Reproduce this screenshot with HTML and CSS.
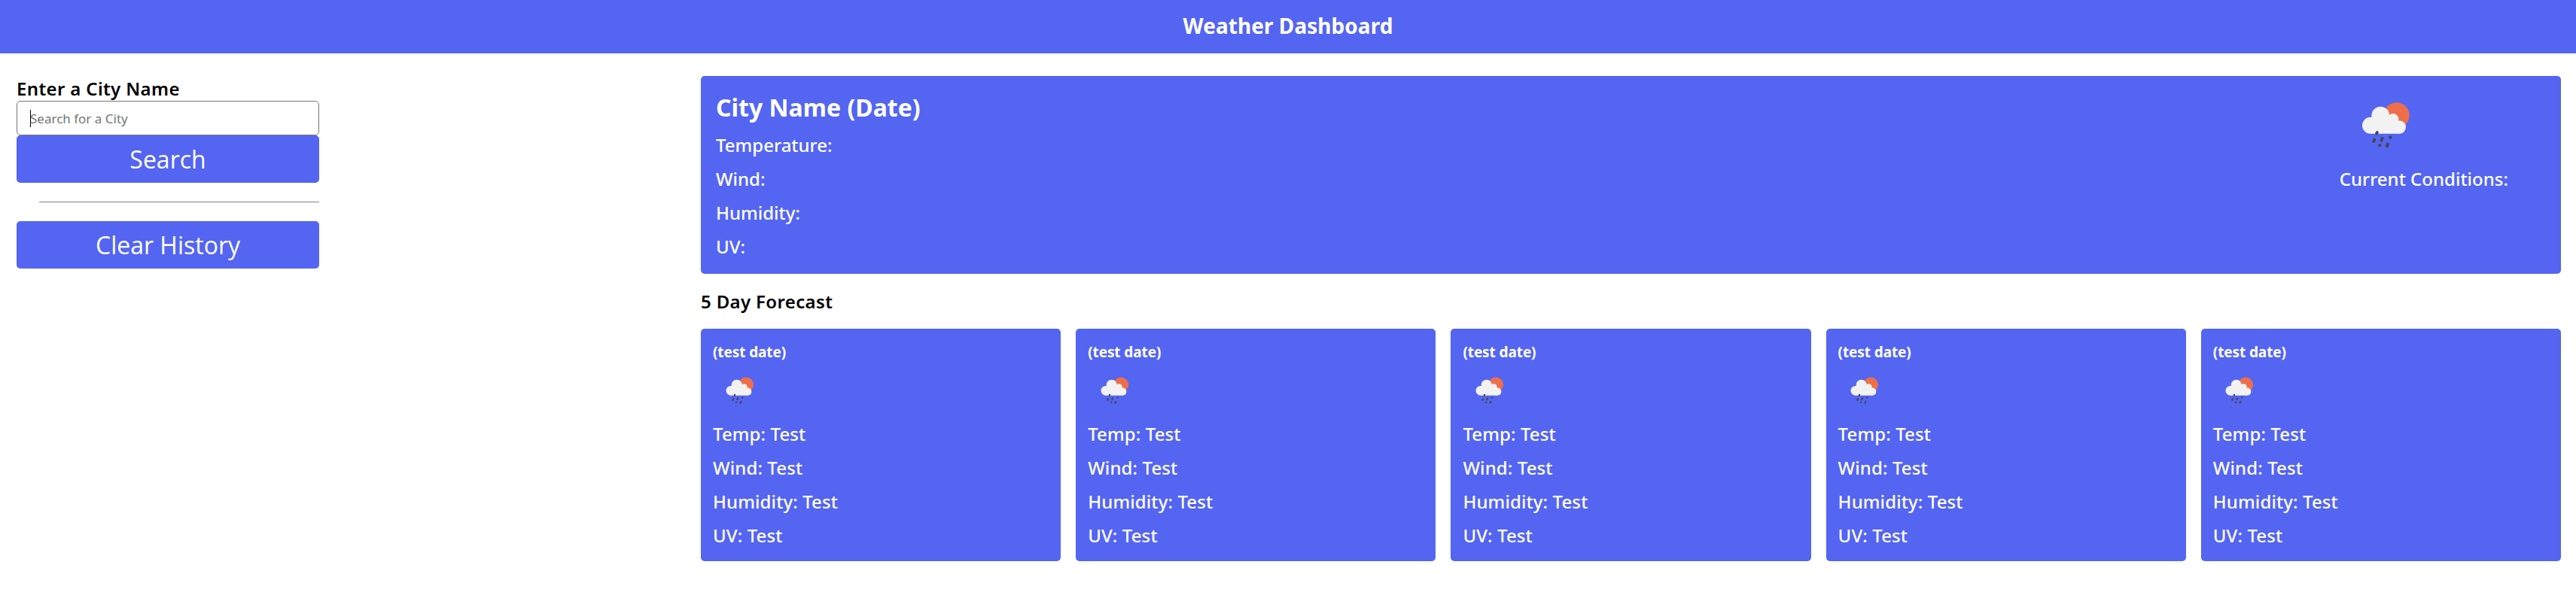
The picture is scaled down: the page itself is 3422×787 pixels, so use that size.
FILE: index.html
```html
<!DOCTYPE html>
<html lang="en">
<head>
<meta charset="utf-8">
<title>Weather Dashboard</title>
<link rel="stylesheet" href="styles.css">
</head>
<body>
<svg class="defs" width="0" height="0">
  <symbol id="rain" viewBox="0 0 300 255">
    <circle cx="191" cy="85" r="51" fill="#ed6f4a"/>
    <g fill="#f2f2f2">
      <circle cx="127" cy="86" r="36"/>
      <circle cx="87" cy="125" r="33"/>
      <circle cx="177" cy="100" r="22"/>
      <circle cx="202" cy="132" r="26"/>
      <path d="M87 100H190L202 120V158H87z"/>
    </g>
    <g stroke="#464655" stroke-width="12" stroke-linecap="round">
      <path d="M111.500 157L113.500 153.500M99.500 189L103 182M130.500 185L134 177M165.500 173.500L167 172M123.500 205L125 204M152.500 208L156 200"/>
    </g>
  </symbol>
</svg>
<header class="header"><h1>Weather Dashboard</h1></header>
<main class="layout">
  <aside class="sidebar">
    <h3>Enter a City Name</h3>
    <div class="field"><span class="caret"></span><span class="placeholder">Search for a City</span></div>
    <button class="btn">Search</button>
    <hr>
    <button class="btn">Clear History</button>
  </aside>
  <section class="content">
    <div class="current">
      <div>
        <h2>City Name (Date)</h2>
        <p>Temperature:</p><p>Wind:</p><p>Humidity:</p><p>UV:</p>
      </div>
      <div class="conditions">
        <svg class="icon"><use href="#rain"/></svg>
        <p>Current Conditions:</p>
      </div>
    </div>
    <h3 class="forecast-title">5 Day Forecast</h3>
    <div class="forecast">
      <div class="day"><h4>(test date)</h4><svg class="icon-sm"><use href="#rain"/></svg><p>Temp: Test</p><p>Wind: Test</p><p>Humidity: Test</p><p>UV: Test</p></div>
      <div class="day"><h4>(test date)</h4><svg class="icon-sm"><use href="#rain"/></svg><p>Temp: Test</p><p>Wind: Test</p><p>Humidity: Test</p><p>UV: Test</p></div>
      <div class="day"><h4>(test date)</h4><svg class="icon-sm"><use href="#rain"/></svg><p>Temp: Test</p><p>Wind: Test</p><p>Humidity: Test</p><p>UV: Test</p></div>
      <div class="day"><h4>(test date)</h4><svg class="icon-sm"><use href="#rain"/></svg><p>Temp: Test</p><p>Wind: Test</p><p>Humidity: Test</p><p>UV: Test</p></div>
      <div class="day"><h4>(test date)</h4><svg class="icon-sm"><use href="#rain"/></svg><p>Temp: Test</p><p>Wind: Test</p><p>Humidity: Test</p><p>UV: Test</p></div>
    </div>
  </section>
</main>
</body>
</html>
```
FILE: styles.css
```css
* { box-sizing: border-box; margin: 0; padding: 0; }
body { font-family: "Noto Sans", "Open Sans", sans-serif; background: #fff; color: #000; font-size: 24px; }
.defs { display: none; }
.header { height: 71px; background: #5465f2; color: #fff; display: flex; justify-content: center; border-bottom: 1px solid #6069d2; }
.header h1 { font-size: 28px; font-weight: 700; line-height: 69px; letter-spacing: 0.05px; }
.layout { display: flex; padding: 30px 20px 0 22px; }
.sidebar { width: 402px; margin-right: 507px; flex: none; }
h3 { font-size: 24px; font-weight: 600; line-height: 33px; letter-spacing: 0.35px; }
.field { height: 46px; border: 1px solid #767676; border-radius: 5px; padding-left: 17px; display: flex; align-items: center; font-size: 17px; color: #757575; }
.caret { width: 1px; height: 23px; background: #000; margin-right: -1px; }
.btn { display: block; width: 100%; height: 63px; border: 0; border-radius: 5px; background: #5465f2; color: #fff; font-family: "Open Sans", sans-serif; font-size: 32px; line-height: 63px; }
hr { border: 0; border-top: 1px solid #808080; margin: 25px 0 25px 30px; }
.content { flex: 1; }
.current { height: 263px; border-radius: 5px; background: #5465f2; color: #fff; display: flex; justify-content: space-between; padding: 20px; }
h2 { font-size: 32px; font-weight: 700; line-height: 44px; margin-bottom: 5px; }
p { font-weight: 500; line-height: 45px; }
.day p { letter-spacing: 0.1px; }
.conditions { padding-right: 50px; }
.icon { display: block; width: 100px; height: 85px; margin: 4px 0 5px 12px; }
.forecast-title { margin: 20px 0 20px; }
.forecast { display: grid; grid-template-columns: repeat(5, 1fr); gap: 20px; }
.day { height: 309px; border-radius: 5px; background: #5465f2; color: #fff; padding: 16px; }
h4 { font-size: 19px; font-weight: 700; line-height: 30px; letter-spacing: -0.1px; }
.icon-sm { display: block; width: 58.400px; height: 49.600px; margin: 12px 0 9.400px 6.500px; }
.sidebar h3 { padding-top: 1px; line-height: 31px; padding-bottom: 1px; }
```
